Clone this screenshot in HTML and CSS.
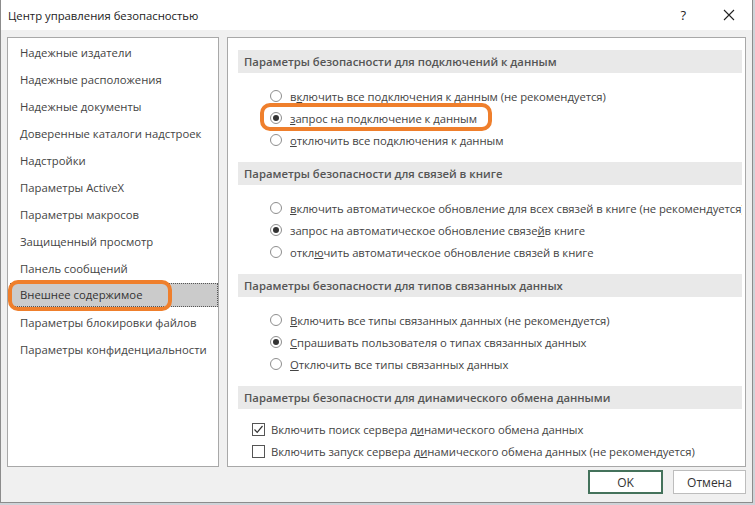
FILE: index.html
```html
<!DOCTYPE html>
<html lang="ru">
<head>
    <meta charset="UTF-8">
    <title>Центр управления безопасностью</title>
    <link rel="stylesheet" href="styles.css">
</head>
<body>
    <div class="window">
        <div class="titlebar">
            <span class="title">Центр управления безопасностью</span>
            <span class="tb-help">?</span>
            <span class="tb-close">
                <svg width="12" height="12" viewBox="0 0 12 12"><path d="M1 1 L11 11 M11 1 L1 11" stroke="#222" stroke-width="1.1" fill="none"/></svg>
            </span>
        </div>

        <div class="dialog">
            <div class="panels">
                <ul class="nav">
                    <li>Надежные издатели</li>
                    <li>Надежные расположения</li>
                    <li>Надежные документы</li>
                    <li>Доверенные каталоги надстроек</li>
                    <li>Надстройки</li>
                    <li>Параметры ActiveX</li>
                    <li>Параметры макросов</li>
                    <li>Защищенный просмотр</li>
                    <li>Панель сообщений</li>
                    <li class="selected">Внешнее содержимое<span class="mark mark-nav"></span></li>
                    <li>Параметры блокировки файлов</li>
                    <li>Параметры конфиденциальности</li>
                </ul>

                <div class="content">
                    <div class="content-inner">
                        <div class="section">
                            <div class="section-head">Параметры безопасности для подключений к данным</div>
                            <div class="options">
                                <div class="opt"><span class="radio"></span>в<u>к</u>лючить все подключения к данным (не рекомендуется)</div>
                                <div class="opt"><span class="radio on"></span><u>з</u>апрос на подключение к данным<span class="mark mark-opt"></span></div>
                                <div class="opt"><span class="radio"></span><u>о</u>тключить все подключения к данным</div>
                            </div>
                        </div>

                        <div class="section">
                            <div class="section-head">Параметры безопасности для связей в книге</div>
                            <div class="options">
                                <div class="opt"><span class="radio"></span><u>в</u>ключить автоматическое обновление для всех связей в книге (не рекомендуется)</div>
                                <div class="opt"><span class="radio on"></span>запрос на автоматическое обновление связе<u>й</u> в книге</div>
                                <div class="opt"><span class="radio"></span>откл<u>ю</u>чить автоматическое обновление связей в книге</div>
                            </div>
                        </div>

                        <div class="section">
                            <div class="section-head">Параметры безопасности для типов связанных данных</div>
                            <div class="options">
                                <div class="opt"><span class="radio"></span><u>В</u>ключить все типы связанных данных (не рекомендуется)</div>
                                <div class="opt"><span class="radio on"></span><u>С</u>прашивать пользователя о типах связанных данных</div>
                                <div class="opt"><span class="radio"></span><u>О</u>тключить все типы связанных данных</div>
                            </div>
                        </div>

                        <div class="section">
                            <div class="section-head">Параметры безопасности для динамического обмена данными</div>
                            <div class="options checks">
                                <div class="opt"><span class="check on"><svg width="11" height="11" viewBox="0 0 11 11"><path d="M1.5 5.5 L4.2 8.3 L9.5 2" stroke="#333" stroke-width="1.2" fill="none"/></svg></span>Включить поиск сервера д<u>и</u>намического обмена данных</div>
                                <div class="opt"><span class="check"></span>Включить запуск сервера д<u>и</u>намического обмена данных (не рекомендуется)</div>
                            </div>
                        </div>
                    </div>
                </div>
            </div>

            <div class="buttons">
                <button type="button" class="btn btn-ok">OK</button>
                <button type="button" class="btn">Отмена</button>
            </div>
        </div>
    </div>
</body>
</html>
```

FILE: styles.css
```css
body {
    margin: 0;
    background-color: #cfd3d8;
    font-family: "Segoe UI", "Open Sans", sans-serif;
    font-size: 11.3px;
    color: #444;
}

.window {
    width: 753px;
    height: 503px;
    box-sizing: border-box;
    background-color: #f0f0f0;
    border: 1px solid #8c8c8c;
    border-top: none;
    display: flex;
    flex-direction: column;
}

.titlebar {
    height: 30px;
    background-color: #fff;
    display: flex;
    align-items: center;
    flex-shrink: 0;
}

.title {
    flex: 1;
    padding-left: 7px;
    font-size: 11.3px;
    color: #222;
}

.tb-help {
    font-size: 13px;
    color: #222;
    margin-right: 37px;
}

.tb-close {
    display: flex;
    margin-right: 17px;
}

.dialog {
    flex: 1;
    padding: 7px 5px 0 6px;
    display: flex;
    flex-direction: column;
}

.panels {
    display: flex;
    gap: 8px;
    height: 430px;
}

.nav {
    list-style: none;
    margin: 0;
    padding: 2px 0 0;
    width: 212px;
    box-sizing: border-box;
    background-color: #fff;
    border: 1px solid #a8a8a8;
}

.nav li {
    height: 27px;
    line-height: 26px;
    padding-left: 12px;
    white-space: nowrap;
}

.nav li.selected {
    position: relative;
    height: 24px;
    line-height: 22px;
    margin: 0 0 3px 2px;
    padding-left: 9px;
    background-color: #cbcbcb;
    border: 1px dotted #555;
    box-sizing: border-box;
    color: #333;
}

.mark {
    position: absolute;
    border: 4px solid #ef7f2c;
    border-radius: 10px;
    box-sizing: border-box;
}

.mark-nav {
    left: -3px;
    top: -4px;
    width: 164px;
    height: 31px;
}

.content {
    width: 519px;
    box-sizing: border-box;
    background-color: #fff;
    border: 1px solid #a8a8a8;
    padding: 12px 3px 0 10px;
    overflow: hidden;
}

.content-inner {
    overflow: hidden;
}

.section {
    margin-bottom: 11px;
}

.section-head {
    height: 23px;
    line-height: 23px;
    padding-left: 6px;
    background-color: #e9e9e9;
    font-weight: 600;
    color: #555;
    white-space: nowrap;
}

.options {
    padding: 12px 0 0 32px;
}

.opt {
    position: relative;
    height: 22px;
    display: flex;
    align-items: center;
    white-space: nowrap;
    letter-spacing: -0.06px;
}

.radio {
    width: 12px;
    height: 12px;
    box-sizing: border-box;
    border: 1px solid #8e8e8e;
    border-radius: 50%;
    background-color: #fff;
    margin-right: 8px;
    flex-shrink: 0;
    display: flex;
    align-items: center;
    justify-content: center;
}

.radio.on::after {
    content: "";
    width: 6px;
    height: 6px;
    border-radius: 50%;
    background-color: #333;
}

.mark-opt {
    left: -10px;
    top: -4px;
    width: 232px;
    height: 28px;
}

.checks {
    padding: 9px 0 0 14px;
}

.check {
    width: 13px;
    height: 13px;
    box-sizing: border-box;
    border: 1px solid #555;
    background-color: #fff;
    margin-right: 6px;
    flex-shrink: 0;
    display: flex;
    align-items: center;
    justify-content: center;
}

.buttons {
    display: flex;
    justify-content: flex-end;
    gap: 10px;
    margin-top: 3px;
    padding-right: 1px;
}

.btn {
    width: 73px;
    height: 24px;
    font-family: inherit;
    font-size: 12px;
    color: #333;
    background-color: #fff;
    border: 1px solid #bdbdbd;
    padding: 0;
}

.btn-ok {
    width: 75px;
    border: 2px solid #44725b;
}
```
